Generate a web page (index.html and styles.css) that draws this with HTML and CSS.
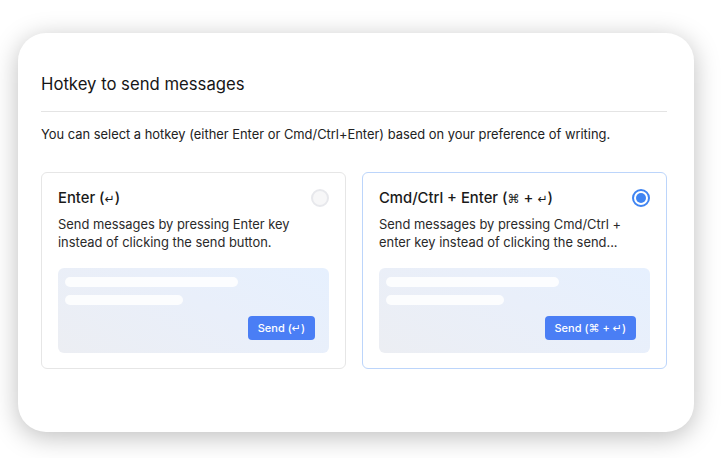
FILE: index.html
```html
<!DOCTYPE html>
<html lang="en">
<head>
<meta charset="utf-8">
<title>Hotkey to send messages</title>
<link rel="stylesheet" href="styles.css">
</head>
<body>
<div class="panel">
  <h1 class="title">Hotkey to send messages</h1>
  <hr class="divider">
  <p class="intro">You can select a hotkey (either Enter or Cmd/Ctrl+Enter) based on your preference of writing.</p>
  <div class="options">
    <div class="option">
      <div class="option-head">
        <span class="option-title">Enter (<span class="sym">↵</span>)</span>
        <span class="radio"></span>
      </div>
      <p class="option-desc">Send messages by pressing Enter key instead of clicking the send button.</p>
      <div class="preview">
        <div class="bar bar-long"></div>
        <div class="bar bar-short"></div>
        <div class="preview-foot"><span class="send"><span class="send-label">Send (<span class="sym">↵</span>)</span></span></div>
      </div>
    </div>
    <div class="option option-active">
      <div class="option-head">
        <span class="option-title">Cmd/Ctrl + Enter (<span class="sym">⌘</span> + <span class="sym">↵</span>)</span>
        <span class="radio radio-on"></span>
      </div>
      <p class="option-desc">Send messages by pressing Cmd/Ctrl + enter key instead of clicking the send...</p>
      <div class="preview">
        <div class="bar bar-long"></div>
        <div class="bar bar-short"></div>
        <div class="preview-foot"><span class="send"><span class="send-label">Send (<span class="sym">⌘</span> + <span class="sym">↵</span>)</span></span></div>
      </div>
    </div>
  </div>
</div>
</body>
</html>
```

FILE: styles.css
```css
html, body {
  margin: 0;
  padding: 0;
  background: #ffffff;
}
body {
  box-sizing: border-box;
  min-height: 458px;
  padding: 33px 0 0 18px;
  font-family: Inter, "Noto Sans", "DejaVu Sans", sans-serif;
  color: #1c1c1c;
}
.panel {
  box-sizing: border-box;
  width: 676px;
  height: 399px;
  background: #ffffff;
  border-radius: 28px;
  box-shadow: 0 5px 26px rgba(0, 0, 0, 0.26);
  padding: 40px 27px 0 23px;
}
.title {
  margin: 0;
  font-size: 16.7px;
  line-height: 22px;
  font-weight: 400;
  color: #161616;
}
.divider {
  margin: 16px 0 0;
  border: 0;
  border-top: 1px solid #e4e4e4;
  height: 0;
}
.intro {
  margin: 13px 0 0;
  font-size: 12.9px;
  line-height: 20px;
  color: #222;
}
.options {
  display: flex;
  gap: 16px;
  margin-top: 27px;
}
.option {
  box-sizing: border-box;
  flex: 0 0 305px;
  height: 197px;
  border: 1px solid #e6e6e6;
  border-radius: 6px;
  padding: 14px 16px 0 16px;
  background: #fff;
}
.option-active {
  border-color: #bcd5fb;
}
.option-head {
  display: flex;
  justify-content: space-between;
  align-items: center;
  height: 22px;
}
.option-title {
  font-size: 14.8px;
  line-height: 22px;
  font-weight: 500;
  color: #1a1a1a;
}
.sym {
  font-family: "DejaVu Sans", sans-serif;
  font-size: 0.82em;
}
.radio {
  box-sizing: border-box;
  width: 18px;
  height: 18px;
  border-radius: 50%;
  border: 2px solid #e7e8ec;
  background: #f7f7f8;
}
.radio-on {
  border: 2px solid #3f84f2;
  background: #fff;
  display: flex;
  align-items: center;
  justify-content: center;
}
.radio-on::after {
  content: "";
  width: 10px;
  height: 10px;
  border-radius: 50%;
  background: #3f84f2;
}
.option-desc {
  margin: 7px 0 0;
  font-size: 12.9px;
  line-height: 18px;
  color: #2a2a2a;
}
.preview {
  box-sizing: border-box;
  margin-top: 16px;
  height: 85px;
  border-radius: 6px;
  background: linear-gradient(30deg, #eceef3 0%, #e9effa 55%, #e6f0fe 100%);
  padding: 9px 14px 13px 7px;
  display: flex;
  flex-direction: column;
}
.bar {
  height: 10px;
  border-radius: 5px;
  background: rgba(255, 255, 255, 0.85);
}
.bar-long {
  width: 173px;
}
.bar-short {
  width: 118px;
  margin-top: 8px;
}
.preview-foot {
  margin-top: auto;
  display: flex;
  justify-content: flex-end;
}
.send {
  display: flex;
  align-items: center;
  height: 24px;
  padding: 0 10px;
  border-radius: 4px;
  background: #4a7ef5;
  color: #fff;
  font-size: 11px;
  font-weight: 500;
}
.send-label {
  white-space: nowrap;
}
.send .sym {
  font-size: 1em;
}
```
